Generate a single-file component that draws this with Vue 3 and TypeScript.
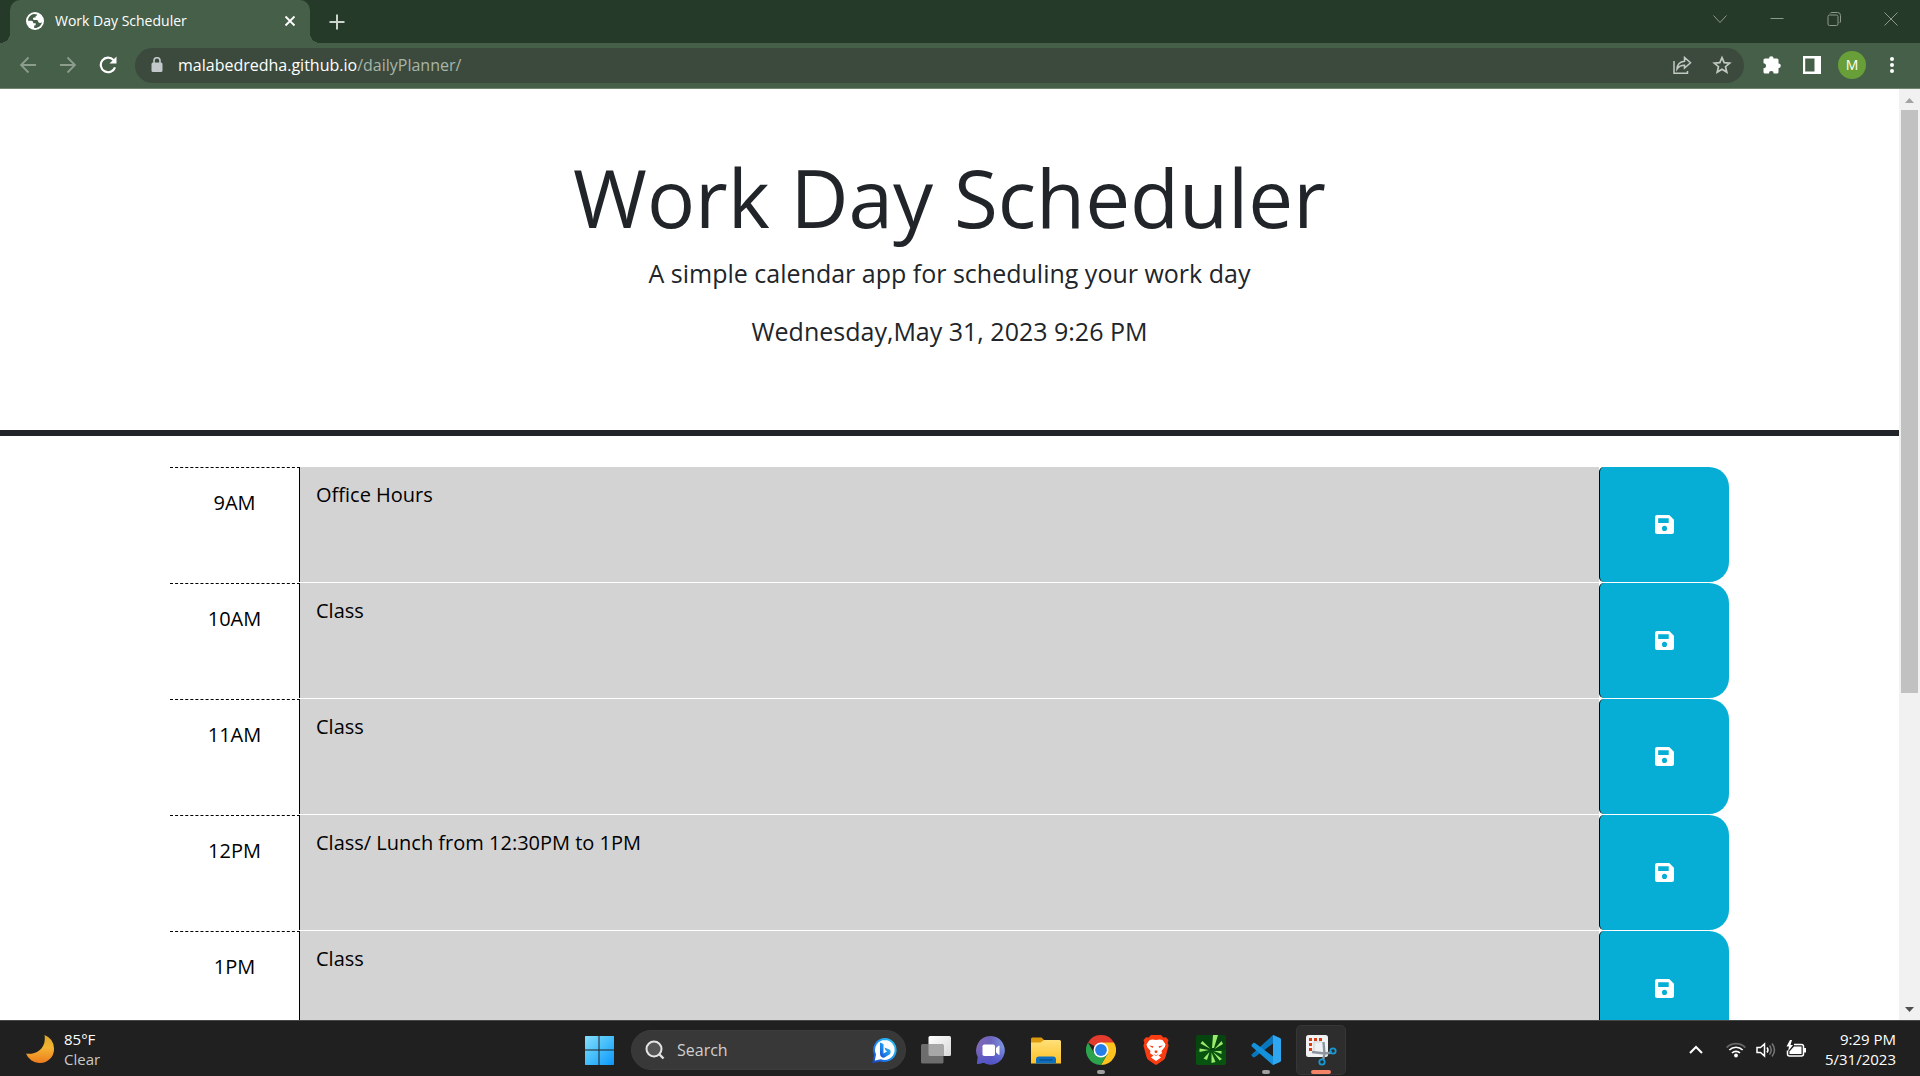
<script setup lang="ts">
import { ref } from 'vue'

interface TimeBlock {
  hour: string
  note: string
}

const blocks = ref<TimeBlock[]>([
  { hour: '9AM', note: 'Office Hours' },
  { hour: '10AM', note: 'Class' },
  { hour: '11AM', note: 'Class' },
  { hour: '12PM', note: 'Class/ Lunch from 12:30PM to 1PM' },
  { hour: '1PM', note: 'Class' },
])
const search = ref('')
</script>

<template>
  <div class="desktop">
    <header class="browser">
      <div class="tabstrip">
        <div class="tab">
          <svg class="favicon" width="18" height="18" viewBox="0 0 18 18">
            <circle cx="9" cy="9" r="9" fill="#fff" />
            <path d="M8 2.1C4.600 2.600 2.100 5.400 2 8.800L5.300 8.800C6.800 8.900 7.300 9.900 7.300 11.200L9.700 11.200L9.700 13.200L8.200 13.400L8.200 15.900C12 16.300 15.300 13.800 15.900 10.200C14.800 11.200 13 11.100 12.300 10C11.600 8.700 12 8.100 10.600 8.100L8 8.100C6.600 8 6.500 6 7.900 5.600L9.600 5.600L9.600 3.900L11 3.600L11 2.400Z" fill="#465f49" />
          </svg>
          <span class="tab-title">Work Day Scheduler</span>
          <button class="plain" aria-label="Close tab">
            <svg width="12" height="12" viewBox="0 0 12 12"><path d="M1.500 1.500L10.500 10.500M10.500 1.500L1.500 10.500" stroke="#fff" stroke-width="1.800" /></svg>
          </button>
        </div>
        <button class="plain newtab" aria-label="New tab">
          <svg width="16" height="16" viewBox="0 0 16 16"><path d="M8 .5V15.500M.5 8H15.500" stroke="#ccd3cc" stroke-width="2" /></svg>
        </button>
        <div class="window-controls">
          <button class="plain" aria-label="Search tabs"><svg width="14" height="14" viewBox="0 0 14 14"><path d="M.5 3.500L7 10.500L13.500 3.500" /></svg></button>
          <button class="plain" aria-label="Minimize"><svg width="14" height="14" viewBox="0 0 14 14"><path d="M.5 6.500H13.500" /></svg></button>
          <button class="plain" aria-label="Restore"><svg width="14" height="14" viewBox="0 0 14 14"><rect x="1" y="3" width="10" height="10.500" rx="1.500" /><path d="M3 1.500Q3.500 .5 5 .5H10.500Q13.500 .5 13.500 3.500V9Q13.500 10.500 12.500 11" /></svg></button>
          <button class="plain" aria-label="Close"><svg width="14" height="14" viewBox="0 0 14 14"><path d="M.5 .5L13.500 13.500M13.500 .5L.5 13.500" /></svg></button>
        </div>
      </div>
      <div class="toolbar">
        <button class="plain nav" aria-label="Back">
          <svg width="18" height="18" viewBox="0 0 18 18"><path d="M17 9H2M9.500 1.500L2 9L9.500 16.500" fill="none" stroke="#8c9d8e" stroke-width="1.800" /></svg>
        </button>
        <button class="plain nav" aria-label="Forward">
          <svg width="18" height="18" viewBox="0 0 18 18"><path d="M1 9H16M8.500 1.500L16 9L8.500 16.500" fill="none" stroke="#8c9d8e" stroke-width="1.800" /></svg>
        </button>
        <button class="plain nav" aria-label="Reload">
          <svg width="18" height="18" viewBox="0 0 18 18"><path d="M14.500 4A7.300 7.300 0 1 0 16 11.300" fill="none" stroke="#fff" stroke-width="2.200" /><path d="M17.500 .5V7.500H10.500Z" fill="#fff" /></svg>
        </button>
        <div class="omnibox">
          <svg width="12" height="16" viewBox="0 0 12 16"><rect x="0.500" y="5.500" width="11" height="9.500" rx="1.500" fill="#c3c8cb" /><path d="M3 6V3.700a3 3 0 0 1 6 0V6" fill="none" stroke="#c3c8cb" stroke-width="1.600" /></svg>
          <a class="url" href="#">malabedredha.github.io<span>/dailyPlanner/</span></a>
          <button class="plain" aria-label="Share">
            <svg width="20" height="20" viewBox="0 0 20 20" fill="none" stroke="#c2c8c2" stroke-width="1.500"><path d="M2 6V18.300H15.500V16M5 14C5.300 9.500 7.500 6.800 12.500 6.300V2.500L18.500 7.800L12.500 13V10.200C9 10.200 6.800 11.300 5 14Z" /></svg>
          </button>
          <button class="plain" aria-label="Bookmark">
            <svg width="20" height="20" viewBox="0 0 20 20"><path d="M10 2.600L12.200 7.600L17.700 8.100L13.500 11.700L14.800 17.100L10 14.200L5.200 17.100L6.500 11.700L2.300 8.100L7.800 7.600Z" fill="none" stroke="#c2c8c2" stroke-width="1.700" /></svg>
          </button>
        </div>
        <button class="plain tool" aria-label="Extensions">
          <svg width="20" height="20" viewBox="0 0 20 20"><path d="M7 3.500a2.300 2.300 0 0 1 4.600 0H15q1.500 0 1.500 1.500V8.500a2.300 2.300 0 0 1 0 4.600V17q0 1.500-1.500 1.500H11.700a2.400 2.400 0 0 0-4.800 0H3Q1.500 18.500 1.500 17V13.300a2.500 2.500 0 0 0 0-5V5Q1.500 3.500 3 3.500Z" fill="#fff" /></svg>
        </button>
        <button class="plain tool" aria-label="Side panel">
          <svg width="18" height="18" viewBox="0 0 18 18"><path d="M0 0H18V18H0ZM2.200 2.500V15.500H11.500V2.500Z" fill="#fff" fill-rule="evenodd" /></svg>
        </button>
        <button class="plain tool" aria-label="Profile"><span class="avatar">M</span></button>
        <button class="plain tool" aria-label="Menu">
          <svg width="6" height="18" viewBox="0 0 6 18" fill="#fff"><circle cx="3" cy="3" r="2" /><circle cx="3" cy="9" r="2" /><circle cx="3" cy="15" r="2" /></svg>
        </button>
      </div>
    </header>

    <div class="viewport">
      <main class="page">
        <div class="hero">
          <h1>Work Day Scheduler</h1>
          <p>A simple calendar app for scheduling your work day</p>
          <p>Wednesday,May 31, 2023 9:26 PM</p>
        </div>
        <div class="schedule">
          <div v-for="(block, i) in blocks" :key="block.hour" class="block">
            <label class="hour" :for="'note-' + i">{{ block.hour }}</label>
            <textarea :id="'note-' + i" v-model="block.note" spellcheck="false"></textarea>
            <button class="save" aria-label="Save">
              <svg width="19" height="19" viewBox="0 0 18 18"><path d="M2 0H13.500L18 4.500V16Q18 18 16 18H2Q0 18 0 16V2Q0 0 2 0ZM3 3V7.500H13V3ZM9 10.300A2.400 2.400 0 1 0 9 15.100A2.400 2.400 0 1 0 9 10.300Z" fill="#fff" fill-rule="evenodd" /></svg>
            </button>
          </div>
        </div>
      </main>
      <div class="scrollbar">
        <svg width="21" height="21" viewBox="0 0 21 21"><path d="M6 14L10.500 9L15 14Z" fill="#a3a3a3" /></svg>
        <div class="track"><div class="thumb"></div><div class="rest"></div></div>
        <svg width="21" height="21" viewBox="0 0 21 21"><path d="M6 8L10.500 13L15 8Z" fill="#505050" /></svg>
      </div>
    </div>

    <footer class="taskbar">
      <div class="weather">
        <svg width="28" height="28" viewBox="0 0 28 28">
          <defs><linearGradient id="moon" x1="0" y1="0" x2="0" y2="1"><stop offset="0" stop-color="#dfa62c" /><stop offset=".45" stop-color="#f3b432" /><stop offset="1" stop-color="#ee7d1e" /></linearGradient></defs>
          <path d="M18.500 0A15 15 0 0 1 28 13.500A14 14 0 0 1 14 28A14.500 14.500 0 0 1 0 18.500C8 20 21 15 18.500 0Z" fill="url(#moon)" />
        </svg>
        <div><div>85°F</div><div class="dim">Clear</div></div>
      </div>
      <div class="apps">
        <button class="plain cell" aria-label="Start">
          <svg width="30" height="30" viewBox="0 0 30 30">
            <defs><linearGradient id="win" gradientUnits="userSpaceOnUse" x1="0" y1="0" x2="30" y2="30"><stop offset="0" stop-color="#8be0fc" /><stop offset=".5" stop-color="#46bffb" /><stop offset="1" stop-color="#0c95fb" /></linearGradient></defs>
            <path d="M1.500 1H14.500V14.500H1V1.500ZM15.500 1H29.500L30 1.500V14.500H15.500ZM1 15.500H14.500V30H1.500L1 29.500ZM15.500 15.500H30V29.500L29.500 30H15.500Z" fill="url(#win)" />
          </svg>
        </button>
        <div class="search">
          <svg width="20" height="20" viewBox="0 0 20 20"><circle cx="9" cy="9" r="7.500" fill="#555" stroke="#e4e4e4" stroke-width="2" /><path d="M14.500 14.500L18.500 18.500" stroke="#e4e4e4" stroke-width="2.400" /></svg>
          <input v-model="search" type="text" placeholder="Search" aria-label="Search" />
          <svg width="26" height="26" viewBox="0 0 26 26">
            <defs>
              <linearGradient id="bing" x1="1" y1="0" x2="0" y2="1"><stop offset="0" stop-color="#29c9f5" /><stop offset=".6" stop-color="#1e86ee" /><stop offset="1" stop-color="#1748c6" /></linearGradient>
            </defs>
            <path d="M13 2A11 11 0 1 1 8.500 23.200L1.500 25L3 17.500A11 11 0 0 1 13 2Z" fill="#fff" stroke="url(#bing)" stroke-width="2" />
            <path d="M8 5.500L11.500 7V16.500L15.200 14.300L13.700 13.500L12.400 10.500L18 12.800Q19.500 15.500 17.500 17.500L12 20.800Q8 20.500 8 16.500Z" fill="url(#bing)" />
          </svg>
        </div>
        <button class="plain cell" aria-label="Task view">
          <svg width="30" height="30" viewBox="0 0 30 30"><defs><linearGradient id="tv" x1="0" y1="0" x2="1" y2="1"><stop offset="0" stop-color="#fff" /><stop offset="1" stop-color="#d8d8d8" /></linearGradient></defs><rect x="7.500" y="1" width="22.500" height="20" rx="1.500" fill="url(#tv)" /><rect y="9" width="22.500" height="19.500" rx="1.500" fill="#6d6d6d" /><path d="M7.500 9H21Q22.500 9 22.500 10.500V21H9Q7.500 21 7.500 19.500Z" fill="#a7a7a7" /></svg>
        </button>
        <button class="plain cell" aria-label="Chat">
          <svg width="30" height="30" viewBox="0 0 30 30">
            <defs><linearGradient id="chat" x1="0" y1="0" x2="1" y2="0"><stop offset="0" stop-color="#8168b5" /><stop offset=".5" stop-color="#6e63bd" /><stop offset="1" stop-color="#7b96e4" /></linearGradient><linearGradient id="chat2" x1="0" y1="0" x2="0" y2="1"><stop offset=".4" stop-color="#5054c8" stop-opacity="0" /><stop offset="1" stop-color="#5054c8" /></linearGradient></defs>
            <path d="M15 1A14.200 14.200 0 1 1 8 27.800L1 29L1.900 22A14.200 14.200 0 0 1 15 1Z" fill="url(#chat)" /><path d="M15 1A14.200 14.200 0 1 1 8 27.800L1 29L1.900 22A14.200 14.200 0 0 1 15 1Z" fill="url(#chat2)" />
            <rect x="6.500" y="9.500" width="12.500" height="11.500" rx="1.800" fill="#fff" /><path d="M20 13L22.700 10.700Q23.500 10.400 23.500 11.200V19.300Q23.500 20.100 22.700 19.800L20 17.500Z" fill="#fff" />
          </svg>
        </button>
        <button class="plain cell" aria-label="File Explorer">
          <svg width="30" height="30" viewBox="0 0 30 30">
            <defs><linearGradient id="fold" x1="0" y1="0" x2="0" y2="1"><stop offset="0" stop-color="#ffe07a" /><stop offset="1" stop-color="#fdc125" /></linearGradient></defs>
            <path d="M0 4Q0 2.500 1.500 2.500H10.500L13 5V9H0Z" fill="#dc9a0c" /><path d="M0 7.500H9.500L13 5H28.500Q30 5 30 6.500V28.500H0Z" fill="url(#fold)" />
            <path d="M5 28.500V24.500Q5 21.500 8 21.500H22Q25 21.500 25 24.500V28.500Z" fill="#0e6fc0" /><path d="M8.500 25H21.500" stroke="#084b87" stroke-width="1.200" />
          </svg>
        </button>
        <button class="plain cell running" aria-label="Chrome">
          <svg width="30" height="30" viewBox="0 0 30 30">
            <path d="M15 15L2 7.500A15 15 0 0 1 28 7.500Z" fill="#e33b2e" /><path d="M15 7.500H28A15 15 0 0 1 15 30L21.500 18.700Z" fill="#fcc31e" /><path d="M8.500 18.700L2 7.500A15 15 0 0 0 15 30L21.500 18.700Z" fill="#2ba24c" />
            <circle cx="15" cy="15" r="7.500" fill="#fff" /><circle cx="15" cy="15" r="5.900" fill="#267ee8" />
          </svg>
        </button>
        <button class="plain cell" aria-label="Brave">
          <svg width="30" height="30" viewBox="0 0 30 30">
            <path d="M10 0H20L22.500 2.500L25 2.300L27.500 5L26.700 8L27.600 10.500L24.500 22Q24 24 22.500 25L16 29.500Q15 30 14 29.500L7.500 25Q6 24 5.500 22L2.400 10.500L3.300 8L2.500 5L5 2.300L7.500 2.500Z" fill="#fa3c12" />
            <path d="M15 5L18.500 4.500L21.500 5L24.500 9.300L23.800 12L20.500 16L21 18.200L17.500 20.500L20 22.500L15 26L10 22.500L12.500 20.500L9 18.200L9.500 16L6.200 12L5.500 9.300L8.500 5L11.500 4.500Z" fill="#fff" />
            <path d="M8 10.500L12.500 11.300L11.500 13ZM22 10.500L17.500 11.300L18.500 13ZM13.800 15.500H16.200L16.500 17.200L15 18.200L13.500 17.200ZM11.500 18.600L15 20.200L18.500 18.600L15 21Z" fill="#fa3c12" />
          </svg>
        </button>
        <button class="plain cell" aria-label="Green app">
          <svg width="30" height="30" viewBox="0 0 30 30">
            <rect width="30" height="30" rx="2.500" fill="#06460e" /><path d="M0 15H30V27.500Q30 30 27.500 30H2.500Q0 30 0 27.500Z" fill="#085310" />
            <path d="M16 13L17 0H22L18 13ZM18.500 14L25.500 6L27 9ZM14.500 14L6.500 6L4.500 8.500ZM13 15L3.500 13.500V17ZM18 16H25.500V19ZM17 17L26 24L23.500 25.500ZM15.500 17.500L19.500 27L15.500 28ZM13.500 17L11 25L7.500 23.500Z" fill="#9bea6c" />
          </svg>
        </button>
        <button class="plain cell running" aria-label="Visual Studio Code">
          <svg width="30" height="30" viewBox="0 0 30 30">
            <path d="M22 0L30 4V26L22 30V8.500L4 22L2.500 22.500L.5 20.500V19.500Z" fill="#0877bd" /><path d="M.5 10L2.500 7.800L4 8L22 21.500V30L.8 11.500Z" fill="#1591db" /><path d="M22 0L29 3Q30 3.500 30 5V25Q30 26.500 29 27L22 30Z" fill="#30a5f0" />
          </svg>
        </button>
        <button class="plain cell running active" aria-label="Snipping Tool">
          <svg width="32" height="32" viewBox="0 0 32 32">
            <rect x="1" y="1" width="22" height="22" rx="2.500" fill="#f0f2f4" /><path d="M4 5.500H7M9 5.500H12M14 5.500H17M5.500 9V12M5.500 14V17" fill="none" stroke="#d83b10" stroke-width="3" /><path d="M9 17V8H17" fill="none" stroke="#cfd3d6" stroke-width="1" />
            <path d="M7 18L20 19.500L27 18.500M18.500 8L19.500 20L18 26" fill="none" stroke="#8c959e" stroke-width="2.400" /><circle cx="28" cy="17" r="2.700" fill="none" stroke="#1698d5" stroke-width="1.800" /><circle cx="17" cy="28" r="2.700" fill="none" stroke="#1698d5" stroke-width="1.800" />
          </svg>
        </button>
      </div>
      <div class="tray">
        <button class="plain" aria-label="Show hidden icons"><svg width="20" height="20" viewBox="0 0 20 20"><path d="M4 14L10 8L16 14" fill="none" stroke="#fff" stroke-width="2" /></svg></button>
        <button class="plain status" aria-label="Network, volume and battery">
          <svg width="20" height="20" viewBox="0 0 20 20" fill="none" stroke-width="1.700"><path d="M.7 7.600A13 13 0 0 1 19.300 7.600" stroke="#666" /><path d="M3.300 10A9.500 9.500 0 0 1 16.700 10M6 13A5.700 5.700 0 0 1 14 13" stroke="#fff" /><circle cx="10" cy="15.500" r="1.900" fill="#fff" /></svg>
          <svg width="20" height="20" viewBox="0 0 20 20" fill="none" stroke-width="1.500"><path d="M1 7.500H4.500L8.500 4V16L4.500 12.500H1ZM11 7.500Q13 10 11 12.500" stroke="#fff" /><path d="M13.500 5.500Q17 10 13.500 14.500M16 3.500Q21 10 16 16.500" stroke="#777" /></svg>
          <svg width="20" height="20" viewBox="0 0 20 20"><path d="M8 4.500H15.500Q17.500 4.500 17.500 6.500V14Q17.500 16 15.500 16H3.500Q1.500 16 1.500 14V10.500" fill="none" stroke="#fff" stroke-width="1.500" /><path d="M8 6.500H15.500V14H3.500V11.500Z" fill="#fff" /><path d="M4 0L.5 6.500H3L2 11.500L7 5H4.500L6 0Z" fill="#fff" /><rect x="18" y="8" width="2" height="4.500" fill="#fff" /></svg>
        </button>
        <div class="clock"><div>9:29 PM</div><div>5/31/2023</div></div>
      </div>
    </footer>
  </div>
</template>

<style>
body {
  overflow: hidden;
}
</style>

<style scoped>
.desktop,
.desktop * {
  box-sizing: border-box;
}
.desktop {
  display: flex;
  flex-direction: column;
  height: 100vh;
  font-family: 'Open Sans', 'Noto Sans', sans-serif;
  color: #212529;
  background: #fff;
}
.desktop svg {
  display: block;
  flex: none;
}
.plain {
  display: flex;
  align-items: center;
  justify-content: center;
  padding: 0;
  border: 0;
  background: none;
  color: inherit;
  font: inherit;
}
.browser {
  flex: none;
  color: #fff;
}
.tabstrip {
  display: flex;
  height: 43px;
  padding: 0 1px 0 10px;
  background: #263a29;
}
.tab {
  position: relative;
  display: flex;
  align-items: center;
  width: 300px;
  padding: 0 14px 2px 16px;
  border-radius: 10px 10px 0 0;
  background: #465f49;
}
.tab::before,
.tab::after {
  content: '';
  position: absolute;
  bottom: 0;
  width: 10px;
  height: 10px;
}
.tab::before {
  left: -10px;
  background: radial-gradient(circle at 0 0, #263a29 10px, #465f49 10px);
}
.tab::after {
  right: -10px;
  background: radial-gradient(circle at 100% 0, #263a29 10px, #465f49 10px);
}
.tab-title {
  flex: 1;
  margin-left: 11px;
  font-size: 14px;
  line-height: 20px;
}
.newtab {
  width: 36px;
  margin-left: 9px;
}
.window-controls {
  display: flex;
  margin-left: auto;
  padding-bottom: 6px;
}
.window-controls .plain {
  width: 57px;
}
.window-controls svg {
  fill: none;
  stroke: #8d9b8f;
  stroke-width: 1;
}
.toolbar {
  display: flex;
  align-items: center;
  height: 46px;
  padding: 0 8px 1px;
  border-bottom: 1px solid #72866f;
  background: #465f49;
}
.nav {
  width: 40px;
  height: 36px;
}
.omnibox {
  display: flex;
  flex: 1;
  align-items: center;
  height: 35px;
  margin: 0 8px 0 7px;
  padding: 0 12px 0 16px;
  border-radius: 18px;
  background: #3b4a3d;
}
.omnibox .plain {
  width: 20px;
  margin-left: 20px;
}
.url {
  flex: 1;
  margin-left: 15px;
  color: #fff;
  font-size: 16px;
  line-height: 24px;
  text-decoration: none;
}
.url span {
  color: #a9b5a8;
}
.tool {
  width: 40px;
  height: 36px;
}
.avatar {
  width: 28px;
  height: 28px;
  border-radius: 50%;
  background: #689f38;
  font-size: 14px;
  line-height: 28px;
  text-align: center;
}
.viewport {
  display: flex;
  flex: 1;
  min-height: 0;
  overflow: hidden;
}
.page {
  flex: 1;
  overflow: hidden;
}
.hero {
  padding: 60px 24px 80px;
  border-bottom: 6px solid #212529;
  text-align: center;
}
.hero h1 {
  margin: 0 0 9px;
  font-size: 80px;
  font-weight: 400;
  line-height: 96px;
}
.hero p {
  margin: 0;
  font-size: 25px;
  line-height: 38px;
}
.hero p + p {
  margin-top: 20px;
}
.schedule {
  max-width: 1559px;
  margin: 31px auto 0;
}
.block {
  display: grid;
  grid-template-columns: 130px 1fr 130px;
  height: 116px;
  border-bottom: 1px solid #fff;
  color: #000;
  font-size: 20px;
  line-height: 30px;
}
.hour {
  padding-top: 20px;
  border-top: 1px dashed #000;
  border-right: 1px solid #000;
  text-align: center;
}
textarea {
  display: block;
  min-width: 0;
  padding: 13px 16px;
  border: 0;
  outline: 0;
  resize: none;
  overflow: hidden;
  background: #d3d3d3;
  color: #000;
  font: inherit;
}
.save {
  display: flex;
  align-items: center;
  justify-content: center;
  padding: 0;
  border: 0;
  border-left: 1px solid #000;
  border-radius: 5px 20px 20px 5px;
  background: #06aed5;
}
.scrollbar {
  display: flex;
  flex: none;
  flex-direction: column;
  width: 21px;
  background: #f1f1f1;
}
.track {
  display: flex;
  flex: 1;
  flex-direction: column;
  padding: 0 2px;
}
.thumb {
  flex: 21;
  background: #c1c1c1;
}
.rest {
  flex: 11;
}
.taskbar {
  display: grid;
  flex: none;
  grid-template-columns: 1fr auto 1fr;
  height: 56px;
  border-top: 1px solid #474747;
  background: #202020;
  color: #fff;
  font-size: 15px;
  line-height: 20px;
}
.weather {
  display: flex;
  align-items: center;
  gap: 10px;
  padding-left: 26px;
}
.dim {
  color: #c8c8c8;
}
.apps {
  display: flex;
  align-items: flex-start;
  gap: 5px;
  padding-top: 4px;
}
.cell {
  position: relative;
  width: 50px;
  height: 50px;
  border-radius: 5px;
}
.running::after {
  content: '';
  position: absolute;
  bottom: 1px;
  left: 21px;
  width: 8px;
  height: 4px;
  border-radius: 2px;
  background: #a0a0a0;
}
.active {
  border: 1px solid #363636;
  background: #2d2d2d;
}
.active::after {
  bottom: 0;
  left: 14px;
  width: 20px;
  background: #f48468;
}
.search {
  display: flex;
  align-items: center;
  width: 275px;
  height: 40px;
  margin: 5px 0 0 2px;
  padding: 0 7px 0 13px;
  border: 1px solid #3c3c3c;
  border-radius: 20px;
  background: #383838;
}
.search input {
  flex: 1;
  min-width: 0;
  margin: 0 0 0 12px;
  padding: 0;
  border: 0;
  outline: 0;
  background: none;
  color: #fff;
  font: inherit;
  font-size: 16px;
}
.search input::placeholder {
  color: #cfcfcf;
  opacity: 1;
}
.tray {
  display: flex;
  align-items: center;
  justify-content: flex-end;
  padding-right: 24px;
}
.status {
  gap: 10px;
  margin: 0 19px 0 20px;
  padding-top: 2px;
}
.clock {
  text-align: right;
}
</style>
